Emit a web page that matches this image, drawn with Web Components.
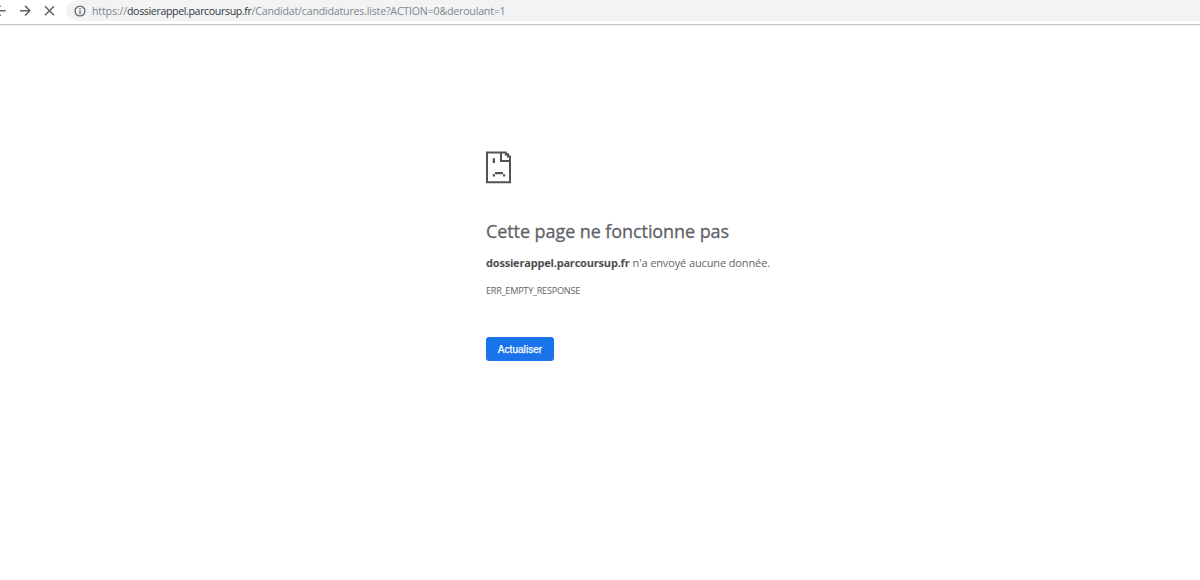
<!DOCTYPE html>
<html lang="fr">
<head>
<meta charset="utf-8">
<title>dossierappel.parcoursup.fr</title>
<style>
html,body{margin:0;height:100%;background:#fff;overflow:hidden}
body{font-family:"Open Sans","Noto Sans",sans-serif;color:#646464}
</style>
</head>
<body>
<browser-window>
  <browser-toolbar slot="toolbar">
    <fit-text slot="scheme" width="35">https://</fit-text>
    <fit-text slot="host" width="124.5">dossierappel.parcoursup.fr</fit-text>
    <fit-text slot="path" width="254">/Candidat/candidatures.liste?ACTION=0&amp;deroulant=1</fit-text>
  </browser-toolbar>
  <error-page>
    <fit-text slot="title" width="243">Cette page ne fonctionne pas</fit-text>
    <fit-text slot="host" width="143.5">dossierappel.parcoursup.fr</fit-text>
    <fit-text slot="message" width="137.5">n'a envoyé aucune donnée.</fit-text>
    <fit-text slot="code" width="94">ERR_EMPTY_RESPONSE</fit-text>
    <action-button slot="action"><fit-text width="44.5">Actualiser</fit-text></action-button>
  </error-page>
</browser-window>
<script>
class FitText extends HTMLElement{
  connectedCallback(){
    this.attachShadow({mode:'open'}).innerHTML=`<style>:host{display:inline-block;white-space:nowrap}span{display:inline-block}</style><span><slot></slot></span>`;
    requestAnimationFrame(()=>this.fit());
  }
  fit(){
    const span=this.shadowRoot.querySelector('span');
    const natural=span.getBoundingClientRect().width;
    const target=Number(this.getAttribute('width'));
    span.style.letterSpacing=(target-natural)/this.textContent.length+'px';
    this.style.width=target+'px';
  }
}
class BrowserWindow extends HTMLElement{
  constructor(){super();this.attachShadow({mode:'open'}).innerHTML=`
<style>:host{display:flex;flex-direction:column;height:100vh}</style>
<slot name="toolbar"></slot><slot></slot>`}
}
class BrowserToolbar extends HTMLElement{
  constructor(){super();this.attachShadow({mode:'open'}).innerHTML=`
<style>
:host{display:flex;height:25px;box-sizing:border-box;border-bottom:1px solid #c3c4c5;background:#fff;box-shadow:0 1px #f1f1f1}
.nav{flex:none;width:66px;height:21px}
.address{flex:1;display:flex;align-items:center;height:21px;background:#f1f3f4;border-radius:11px 0 0 11px;padding-left:8px;font-size:10.6px;line-height:15px;color:#80868b}
.info{width:12px;height:12px;margin-right:6px}
.host{color:#34383b}
.url{display:flex;padding-top:2px}
svg{display:block;fill:none;stroke:#5f6368}
</style>
<svg class="nav" viewBox="0 0 66 21" stroke-width="1.5"><path d="M-4 10.7H5.7M0.6 5.7L-4.4 10.7L0.6 15.7M20 10.7H29.7M25.1 5.9L29.9 10.7L25.1 15.5M45 6.2L54 15.2M54 6.2L45 15.2"/></svg>
<div class="address">
<svg class="info" viewBox="0 0 12 12" stroke-width="1.3"><circle cx="6" cy="6" r="4.9"/><path d="M6 5.2V9M6 3V4.3"/></svg>
<div class="url"><slot name="scheme"></slot><span class="host"><slot name="host"></slot></span><slot name="path"></slot></div>
</div>`}
}
class SadPage extends HTMLElement{
  constructor(){super();this.attachShadow({mode:'open'}).innerHTML=`
<style>:host{display:block;width:26px;height:33px}svg{display:block}</style>
<svg width="26" height="33" viewBox="0 0 26 33" fill="#535353"><path fill-rule="evenodd" d="M0 .4H20.8V2.3H23V4.4H25V32.2H0ZM2 2.4V30.2H23V11H14V2.4ZM16 2.4V9H23V6.4H20.8V4.4H18.8V2.4Z"/><path d="M6.7 7.2H9V12H6.7ZM9 21H17V23.2H9ZM6.7 23.2H9V25.6H6.7ZM17 23.2H19.2V25.6H17Z"/></svg>`}
}
class ActionButton extends HTMLElement{
  constructor(){super();this.attachShadow({mode:'open'}).innerHTML=`
<style>:host{display:block}button{display:flex;align-items:center;justify-content:center;width:68px;height:24px;padding:1px 0 0;border:0;border-radius:3px;background:#1a73e8;color:#fff;font:10px/14px "Liberation Sans",sans-serif;-webkit-text-stroke:.25px #fff}</style>
<button><slot></slot></button>`}
}
class ErrorPage extends HTMLElement{
  constructor(){super();this.attachShadow({mode:'open'}).innerHTML=`
<style>
:host{display:block;padding:126px 0 0 486px;color:#646464}
h1{margin:34px 0 0;font-size:18px;line-height:26px;font-weight:500;color:#5f6368;height:26px;-webkit-text-stroke:.3px #5f6368}
p{margin:11px 0 0;display:flex;gap:2px;font-size:11px;line-height:16px;height:16px}
strong{font-weight:700;color:#4b4d50;margin-right:1px}
.code{margin-top:13px;font-size:9.2px;line-height:14px;height:14px}
.action{margin-top:39px}
</style>
<sad-page></sad-page>
<h1><slot name="title"></slot></h1>
<p><strong><slot name="host"></slot></strong><slot name="message"></slot></p>
<div class="code"><slot name="code"></slot></div>
<div class="action"><slot name="action"></slot></div>`}
}
customElements.define('fit-text',FitText);
customElements.define('browser-window',BrowserWindow);
customElements.define('browser-toolbar',BrowserToolbar);
customElements.define('sad-page',SadPage);
customElements.define('action-button',ActionButton);
customElements.define('error-page',ErrorPage);
</script>
</body>
</html>
